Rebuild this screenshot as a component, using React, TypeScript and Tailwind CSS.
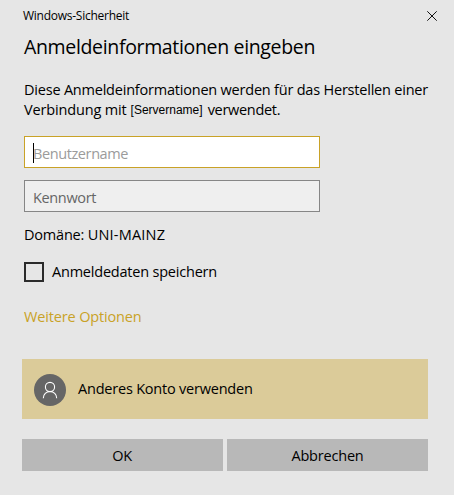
export default function App() {
  return (
    <main className="flex h-[495px] w-[454px] flex-col bg-[#e6e6e6] font-['Open_Sans','Noto_Sans',sans-serif] text-[14.5px] leading-5 tracking-[-0.21px] text-black">
      <header className="flex h-8 items-center justify-between pr-[17px] pl-[23px]">
        <span className="text-[12px] tracking-[-0.26px] whitespace-nowrap">Windows-Sicherheit</span>
        <button type="button" aria-label="Schließen" className="size-[10px]">
          <svg viewBox="0 0 10 10" className="block size-[10px]" fill="none" stroke="#111" strokeWidth="1">
            <path d="M0.3 0.3 9.7 9.7M9.7 0.3 0.3 9.7" />
          </svg>
        </button>
      </header>

      <div className="flex flex-col pr-[26px] pl-6">
        <h1 className="h-7 pt-px text-[19.5px] leading-7 tracking-[-0.34px] whitespace-nowrap">Anmeldeinformationen eingeben</h1>
        <div className="mt-5 whitespace-nowrap">
          <p>Diese Anmeldeinformationen werden für das Herstellen einer</p>
          <p className="flex">
            <span className="tracking-[-0.15px]">Verbindung mit</span>
            <span className="ml-1 font-['Liberation_Sans',sans-serif] text-[12px] tracking-normal">[Servername]</span>
            <span className="ml-[5px] tracking-[-0.3px]">verwendet.</span>
          </p>
        </div>

        <div className="relative mt-4 w-[296px]">
          <input
            placeholder="Benutzername"
            className="block h-8 w-full border border-[#c9a227] bg-white pt-[3px] pl-2 tracking-[-0.4px] outline-none placeholder:text-[#9b9b9b]"
          />
          <span className="absolute top-[7px] left-[9px] h-5 w-px bg-black" />
        </div>
        <input
          type="password"
          placeholder="Kennwort"
          className="mt-3 block h-8 w-[296px] border border-[#868686] bg-[#efefef] pt-[3px] pl-2 tracking-[-0.35px] outline-none placeholder:text-[#666]"
        />
        <p className="mt-[13px] flex gap-[3.5px] whitespace-nowrap">
          <span className="tracking-[-0.2px]">Domäne:</span>
          <span className="tracking-[0.2px]">UNI-MAINZ</span>
        </p>

        <label className="mt-[17px] flex h-5 items-center gap-2 whitespace-nowrap">
          <span className="size-5 border-2 border-[#2b2b2b]" />
          <span>Anmeldedaten speichern</span>
        </label>
        <a className="mt-[25px] self-start tracking-[-0.15px] whitespace-nowrap text-[#c9a227]">Weitere Optionen</a>
      </div>

      <div className="mt-8 mr-[26px] ml-[22px] flex h-[60px] items-center gap-3 bg-[#dbcb99] pt-[2px] pl-3">
        <span className="size-8 rounded-full bg-[#666]">
          <svg viewBox="0 0 32 32" className="block size-8" fill="none" stroke="#fff" strokeWidth="1.1">
            <circle cx="16" cy="13" r="4.6" />
            <path d="M9.3 24.2c0-4 3-6.7 6.7-6.7s6.7 2.7 6.7 6.7" />
          </svg>
        </span>
        <span className="-mt-[2px] whitespace-nowrap">Anderes Konto verwenden</span>
      </div>

      <footer className="mt-5 mr-[26px] ml-[22px] grid grid-cols-2 gap-1">
        <button type="button" className="h-8 bg-[#b8b8b8] pt-px pr-px tracking-[-0.21px]">OK</button>
        <button type="button" className="h-8 bg-[#b8b8b8] pt-px tracking-[-0.2px]">Abbrechen</button>
      </footer>
    </main>
  );
}
